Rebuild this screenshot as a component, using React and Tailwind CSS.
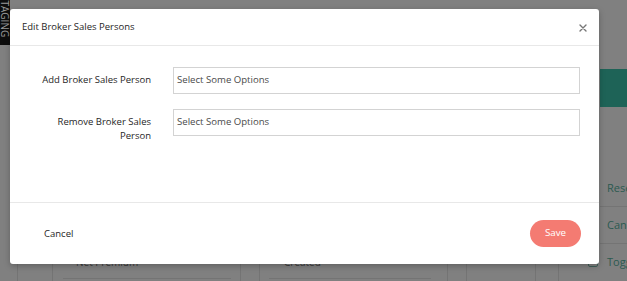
import React from "react";

const font = { fontFamily: '"Open Sans", "Liberation Sans", sans-serif' };

function Backdrop() {
  return (
    <div className="flex h-full w-full bg-[#808080]">
      {/* main page column */}
      <div className="relative flex w-[600px] flex-col">
        {/* staging ribbon */}
        <div className="absolute left-0 top-0 flex h-[45px] w-[10px] justify-center overflow-hidden bg-[#0d0d0d]">
          <span className="-mt-[5px] text-[10px] leading-[10px] text-[#9a9a9a] [writing-mode:vertical-rl]">
            STAGING
          </span>
        </div>

        {/* filter / table header row peeking below the dialog */}
        <div className="mt-auto flex h-[42px] text-[10px] text-[#3a3a3a]">
          <div className="w-[17px]" />
          <div className="w-[35px] border-l border-[#747474]" />
          <div className="flex w-[188px] flex-col justify-end border-l border-[#747474] pb-[2px] pl-[10px]">
            <span className="pl-[13px] leading-[14px]">Net Premium</span>
            <div className="mt-[9px] h-[1px] w-[168px] bg-[#747474]" />
          </div>
          <div className="w-[19px] border-l border-[#747474]" />
          <div className="flex w-[188px] flex-col justify-end border-l border-[#747474] pb-[2px] pl-[9px]">
            <span className="pl-[15px] leading-[14px]">Created</span>
            <div className="mt-[9px] h-[1px] w-[162px] bg-[#747474]" />
          </div>
          <div className="w-[19px] border-l border-[#747474]" />
          <div className="w-[69px] border-l border-[#747474]" />
          <div className="w-[23px] border-l border-[#747474]" />
          <div className="flex flex-1 items-end border-l border-[#747474] pb-[14px] pl-[29px]">
            <div className="h-[10px] w-[10px] rounded-[2px] border border-[#3f5f58]" />
          </div>
        </div>
      </div>

      {/* right action column */}
      <div className="flex w-[27px] flex-col text-[11px] text-[#2c5a50]">
        <div className="h-[69px]" />
        <div className="h-[38px] bg-[#1e6357]" />
        <div className="h-[63px]" />
        <div className="flex h-[37px] items-center border-b border-[#747474] pl-[7px]">Reset</div>
        <div className="flex h-[37px] items-center border-b border-[#747474] pl-[7px]">Cancel</div>
        <div className="flex flex-1 items-center pl-[7px]">Toggle</div>
      </div>
    </div>
  );
}

function Field({ label }) {
  return (
    <div className="flex items-start">
      <label className="ml-[23px] w-[118px] pt-[6px] text-right text-[9.5px] leading-[14px] text-[#262626]">
        {label}
      </label>
      <div className="ml-[22px] flex h-[27px] w-[407px] items-center border border-[#d3d3d3] pl-[3px] text-[9.6px] text-[#4a4a4a]">
        Select Some Options
      </div>
    </div>
  );
}

export default function App() {
  return (
    <div className="relative h-[281px] w-[627px] overflow-hidden" style={font}>
      <Backdrop />

      {/* dialog */}
      <div className="absolute left-[10px] top-[9px] flex h-[255px] w-[589px] flex-col rounded-[3px] bg-white shadow-[0_2px_6px_rgba(0,0,0,0.25)]">
        <div className="flex h-[37px] items-center justify-between border-b border-[#e8e8e8] pl-[12px] pr-[12px]">
          <span className="pt-[1px] text-[9.5px] text-[#262626]">Edit Broker Sales Persons</span>
          <svg width="8" height="8" viewBox="0 0 8 8" className="mt-[1px] text-[#777]">
            <path d="M1 1 L7 7 M7 1 L1 7" stroke="currentColor" strokeWidth="1.4" strokeLinecap="round" />
          </svg>
        </div>

        <div className="flex h-[157px] flex-col gap-[15px] border-b border-[#e8e8e8] pt-[21px]">
          <Field label="Add Broker Sales Person" />
          <Field label="Remove Broker Sales Person" />
        </div>

        <div className="flex flex-1 items-center justify-between pl-[34px] pr-[18px]">
          <button className="pt-[1px] text-[9.5px] text-[#262626]">Cancel</button>
          <button className="h-[27px] w-[51px] rounded-full bg-[#f47b72] text-[9.8px] text-white">
            Save
          </button>
        </div>
      </div>
    </div>
  );
}
